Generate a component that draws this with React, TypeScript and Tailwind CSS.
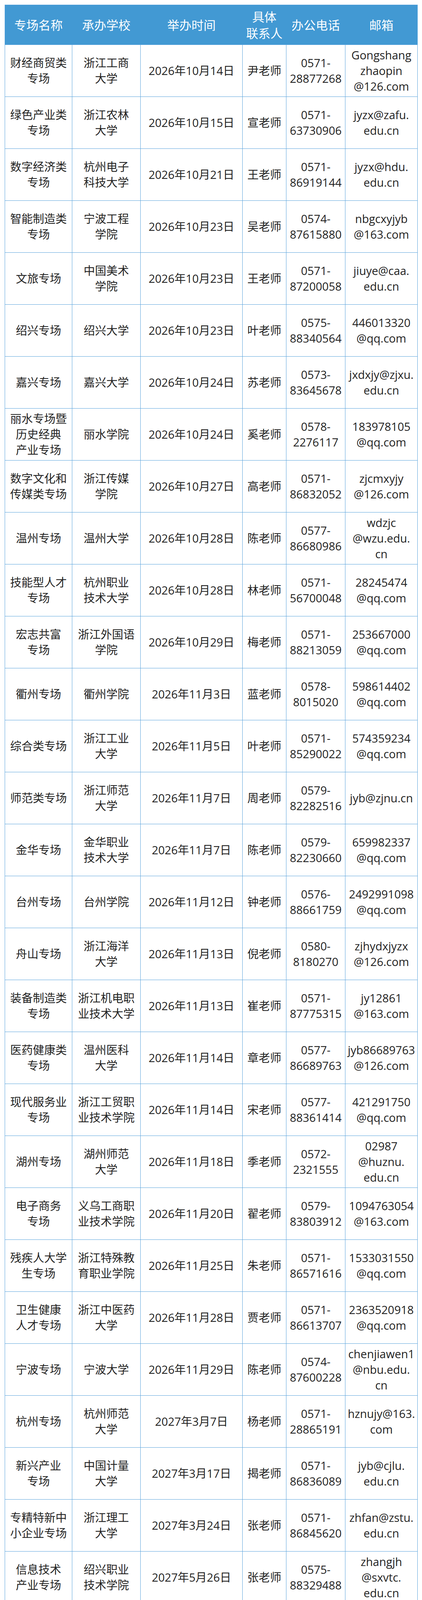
import React from "react";

type Row = {
  name: string[];
  school: string[];
  date: string[];
  contact: string;
  phone: string[];
  email: string[];
};

const rows: Row[] = [
  { name: ["财经商贸类", "专场"], school: ["浙江工商", "大学"], date: ["2026年10月14日"], contact: "尹老师", phone: ["0571-", "28877268"], email: ["Gongshang", "zhaopin", "@126.com"] },
  { name: ["绿色产业类", "专场"], school: ["浙江农林", "大学"], date: ["2026年10月15日"], contact: "宣老师", phone: ["0571-", "63730906"], email: ["jyzx@zafu.", "edu.cn"] },
  { name: ["数字经济类", "专场"], school: ["杭州电子", "科技大学"], date: ["2026年10月21日"], contact: "王老师", phone: ["0571-", "86919144"], email: ["jyzx@hdu.", "edu.cn"] },
  { name: ["智能制造类", "专场"], school: ["宁波工程", "学院"], date: ["2026年10月23日"], contact: "吴老师", phone: ["0574-", "87615880"], email: ["nbgcxyjyb", "@163.com"] },
  { name: ["文旅专场"], school: ["中国美术", "学院"], date: ["2026年10月23日"], contact: "王老师", phone: ["0571-", "87200058"], email: ["jiuye@caa.", "edu.cn"] },
  { name: ["绍兴专场"], school: ["绍兴大学"], date: ["2026年10月23日"], contact: "叶老师", phone: ["0575-", "88340564"], email: ["446013320", "@qq.com"] },
  { name: ["嘉兴专场"], school: ["嘉兴大学"], date: ["2026年10月24日"], contact: "苏老师", phone: ["0573-", "83645678"], email: ["jxdxjy@zjxu.", "edu.cn"] },
  { name: ["丽水专场暨", "历史经典", "产业专场"], school: ["丽水学院"], date: ["2026年10月24日"], contact: "奚老师", phone: ["0578-", "2276117"], email: ["183978105", "@qq.com"] },
  { name: ["数字文化和", "传媒类专场"], school: ["浙江传媒", "学院"], date: ["2026年10月27日"], contact: "高老师", phone: ["0571-", "86832052"], email: ["zjcmxyjy", "@126.com"] },
  { name: ["温州专场"], school: ["温州大学"], date: ["2026年10月28日"], contact: "陈老师", phone: ["0577-", "86680986"], email: ["wdzjc", "@wzu.edu.", "cn"] },
  { name: ["技能型人才", "专场"], school: ["杭州职业", "技术大学"], date: ["2026年10月28日"], contact: "林老师", phone: ["0571-", "56700048"], email: ["28245474", "@qq.com"] },
  { name: ["宏志共富", "专场"], school: ["浙江外国语", "学院"], date: ["2026年10月29日"], contact: "梅老师", phone: ["0571-", "88213059"], email: ["253667000", "@qq.com"] },
  { name: ["衢州专场"], school: ["衢州学院"], date: ["2026年11月3日"], contact: "蓝老师", phone: ["0578-", "8015020"], email: ["598614402", "@qq.com"] },
  { name: ["综合类专场"], school: ["浙江工业", "大学"], date: ["2026年11月5日"], contact: "叶老师", phone: ["0571-", "85290022"], email: ["574359234", "@qq.com"] },
  { name: ["师范类专场"], school: ["浙江师范", "大学"], date: ["2026年11月7日"], contact: "周老师", phone: ["0579-", "82282516"], email: ["jyb@zjnu.cn"] },
  { name: ["金华专场"], school: ["金华职业", "技术大学"], date: ["2026年11月7日"], contact: "陈老师", phone: ["0579-", "82230660"], email: ["659982337", "@qq.com"] },
  { name: ["台州专场"], school: ["台州学院"], date: ["2026年11月12日"], contact: "钟老师", phone: ["0576-", "88661759"], email: ["2492991098", "@qq.com"] },
  { name: ["舟山专场"], school: ["浙江海洋", "大学"], date: ["2026年11月13日"], contact: "倪老师", phone: ["0580-", "8180270"], email: ["zjhydxjyzx", "@126.com"] },
  { name: ["装备制造类", "专场"], school: ["浙江机电职", "业技术大学"], date: ["2026年11月13日"], contact: "崔老师", phone: ["0571-", "87775315"], email: ["jy12861", "@163.com"] },
  { name: ["医药健康类", "专场"], school: ["温州医科", "大学"], date: ["2026年11月14日"], contact: "章老师", phone: ["0577-", "86689763"], email: ["jyb86689763", "@126.com"] },
  { name: ["现代服务业", "专场"], school: ["浙江工贸职", "业技术学院"], date: ["2026年11月14日"], contact: "宋老师", phone: ["0577-", "88361414"], email: ["421291750", "@qq.com"] },
  { name: ["湖州专场"], school: ["湖州师范", "大学"], date: ["2026年11月18日"], contact: "季老师", phone: ["0572-", "2321555"], email: ["02987", "@huznu.", "edu.cn"] },
  { name: ["电子商务", "专场"], school: ["义乌工商职", "业技术学院"], date: ["2026年11月20日"], contact: "翟老师", phone: ["0579-", "83803912"], email: ["1094763054", "@163.com"] },
  { name: ["残疾人大学", "生专场"], school: ["浙江特殊教", "育职业学院"], date: ["2026年11月25日"], contact: "朱老师", phone: ["0571-", "86571616"], email: ["1533031550", "@qq.com"] },
  { name: ["卫生健康", "人才专场"], school: ["浙江中医药", "大学"], date: ["2026年11月28日"], contact: "贾老师", phone: ["0571-", "86613707"], email: ["2363520918", "@qq.com"] },
  { name: ["宁波专场"], school: ["宁波大学"], date: ["2026年11月29日"], contact: "陈老师", phone: ["0574-", "87600228"], email: ["chenjiawen1", "@nbu.edu.", "cn"] },
  { name: ["杭州专场"], school: ["杭州师范", "大学"], date: ["2027年3月7日"], contact: "杨老师", phone: ["0571-", "28865191"], email: ["hznujy@163.", "com"] },
  { name: ["新兴产业", "专场"], school: ["中国计量", "大学"], date: ["2027年3月17日"], contact: "揭老师", phone: ["0571-", "86836089"], email: ["jyb@cjlu.", "edu.cn"] },
  { name: ["专精特新中", "小企业专场"], school: ["浙江理工", "大学"], date: ["2027年3月24日"], contact: "张老师", phone: ["0571-", "86845620"], email: ["zhfan@zstu.", "edu.cn"] },
  { name: ["信息技术", "产业专场"], school: ["绍兴职业", "技术学院"], date: ["2027年5月26日"], contact: "张老师", phone: ["0575-", "88329488"], email: ["zhangjh", "@sxvtc.", "edu.cn"] },
];

function Cell({
  lines,
  tall,
  span2,
}: {
  lines: string[];
  tall?: boolean;
  span2?: boolean;
}) {
  return (
    <div
      className={
        span2
          ? "row-span-2 bg-white flex flex-col items-center justify-center text-center"
          : "bg-white flex flex-col items-center justify-center text-center"
      }
    >
      {lines.map((l, i) => (
        <div
          key={i}
          className={
            tall
              ? "h-[42px] leading-[42px] whitespace-nowrap"
              : "h-[40px] leading-[40px] whitespace-nowrap"
          }
        >
          {l}
        </div>
      ))}
    </div>
  );
}

function HeadCell({ lines }: { lines: string[] }) {
  return (
    <div className="flex flex-col items-center justify-center text-center">
      {lines.map((l, i) => (
        <div key={i} className="h-[42px] leading-[42px] whitespace-nowrap">
          {l}
        </div>
      ))}
    </div>
  );
}

export default function App() {
  return (
    <div className="bg-white w-[1080px] pl-3 pt-3 pb-3 font-['Open_Sans','Noto_Sans_CJK_SC',sans-serif] text-[#222222] text-[29px]">
      <div className="w-[1057px] bg-[#5ba4dc] p-px grid grid-cols-[171px_174px_260px_111px_150px_184px] grid-rows-[101px_repeat(32,132px)] gap-px">
        <div className="col-span-6 bg-[#4299d3] text-white text-[31px] grid grid-cols-[171px_174px_260px_111px_150px_184px] gap-px">
          <HeadCell lines={["专场名称"]} />
          <HeadCell lines={["承办学校"]} />
          <HeadCell lines={["举办时间"]} />
          <HeadCell lines={["具体", "联系人"]} />
          <HeadCell lines={["办公电话"]} />
          <HeadCell lines={["邮箱"]} />
        </div>
        {rows.map((r, i) => (
          <React.Fragment key={i}>
            <Cell lines={r.name} />
            <Cell lines={r.school} />
            <Cell lines={r.date} />
            <Cell lines={[r.contact]} />
            <Cell lines={r.phone} />
            <Cell lines={r.email} />
          </React.Fragment>
        ))}
        <Cell tall lines={["2026年秋季", "网络招聘会"]} />
        <Cell
          span2
          tall
          lines={["浙江24365", "大学生就业", "服务平台", "(24365.zj.s", "martedu.cn)"]}
        />
        <Cell tall lines={["2026年11月15日", "—2026年12月20日"]} />
        <Cell span2 tall lines={["沈老师"]} />
        <Cell span2 tall lines={["0571-", "88008656"]} />
        <Cell span2 tall lines={["zhejiangjiuye", "@163.com"]} />
        <Cell tall lines={["2027年春季", "网络招聘会"]} />
        <Cell tall lines={["2027年3月15日", "—2027年4月20日"]} />
      </div>
    </div>
  );
}
